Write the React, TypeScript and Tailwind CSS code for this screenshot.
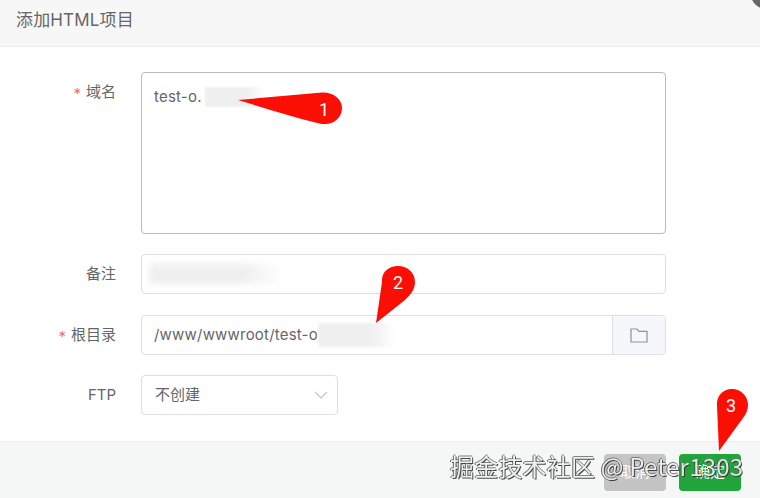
import React from "react";

const font = { fontFamily: '"Inter", "Noto Sans CJK SC", sans-serif' };

function Label({ text, required }: { text: string; required?: boolean }) {
  return (
    <div className="w-[116px] shrink-0 flex justify-end items-center h-[40px] text-[15px] text-[#666]">
      {required && <span className="text-[#f56c6c] mr-[5px] text-[15px] leading-none mt-[3px]">*</span>}
      <span>{text}</span>
    </div>
  );
}

function Pin({ d, n, tx, ty }: { d: string; n: string; tx: number; ty: number }) {
  return (
    <svg className="absolute left-0 top-0" width="760" height="498" viewBox="0 0 760 498">
      <path d={d} fill="#fb0f05" />
      <text x={tx} y={ty} fill="#fff" fontSize="18" textAnchor="middle" style={{ fontFamily: '"Roboto", sans-serif' }}>
        {n}
      </text>
    </svg>
  );
}

export default function App() {
  return (
    <div className="relative w-[760px] h-[498px] overflow-hidden bg-white flex flex-col" style={font}>
      <header className="h-[47px] shrink-0 bg-[#f7f7f7] border-b border-[#ececec] pl-[16px] flex items-center pb-[4px]">
        <span className="text-[17px] text-[#666] tracking-[0.15px]">添加HTML项目</span>
      </header>

      <main className="flex-1 flex flex-col pt-[25px]">
        <div className="flex">
          <Label text="域名" required />
          <div className="ml-[25px] w-[525px] h-[162px] border border-[#bbbbbb] rounded-[4px] px-[12px] pt-[13px] text-[15px] leading-[22px] text-[#666] tracking-[0.2px] flex items-start">
            <span>test-o.</span>
            <span className="ml-[3px] w-[60px] h-[20px] mt-[1px] bg-gradient-to-r from-[#efefef] from-70% to-white blur-[1px]" />
          </div>
        </div>

        <div className="flex mt-[20px]">
          <Label text="备注" />
          <div className="ml-[25px] w-[525px] h-[40px] border border-[#dcdfe6] rounded-[4px] pl-[7px] flex items-center">
            <span className="w-[134px] h-[20px] bg-gradient-to-r from-[#efefef] from-70% to-white blur-[3px]" />
          </div>
        </div>

        <div className="flex mt-[21px]">
          <Label text="根目录" required />
          <div className="ml-[25px] w-[525px] h-[40px] border border-[#dcdfe6] rounded-[4px] flex items-center">
            <div className="flex-1 pl-[12px] flex items-center text-[15px] text-[#666] tracking-[0.2px]">
              <span>/www/wwwroot/test-o</span>
              <span className="w-[78px] h-[24px] bg-gradient-to-r from-[#f0f0f0] from-70% to-white blur-[1px]" />
            </div>
            <div className="w-[53px] h-full shrink-0 border-l border-[#dcdfe6] bg-[#f5f7fa] rounded-r-[4px] flex items-center justify-center">
              <svg width="18" height="15" viewBox="0 0 18 15" fill="none" stroke="#8b929e" strokeWidth="1.2">
                <path d="M1 1h6l2 2.4h8V14H1z" />
              </svg>
            </div>
          </div>
        </div>

        <div className="flex mt-[20px]">
          <Label text="FTP" />
          <div className="ml-[25px] w-[197px] h-[40px] border border-[#dcdfe6] rounded-[4px] pl-[13px] pr-[9px] flex items-center justify-between text-[15px] text-[#666]">
            <span>不创建</span>
            <svg width="14" height="8" viewBox="0 0 14 8" fill="none" stroke="#c0c4cc" strokeWidth="1.1">
              <path d="M1 1l6 6 6-6" />
            </svg>
          </div>
        </div>
      </main>

      <footer className="h-[57px] shrink-0 bg-[#f5f7f7] border-t border-[#e8eded] flex items-start justify-end gap-[13px] pt-[12px] pr-[19px]">
        <button className="w-[62px] h-[37px] rounded-[4px] bg-[#c4c4c4] text-white text-[15px]">取消</button>
        <button className="w-[62px] h-[37px] rounded-[4px] bg-[#20a53a] text-white text-[15px]">确定</button>
      </footer>

      <Pin
        d="M238 100 L322 92.5 C333 92 342 99 342 108 C342 118 333 125 323 124 C318 123.5 290 116 238 100 Z"
        n="1"
        tx={324}
        ty={116}
      />
      <Pin
        d="M376 323 L382 282 C381 272 389 266 398 266 C408 266 415 273 415 282 C415 290 410 295 405 300 Z"
        n="2"
        tx={398}
        ty={289}
      />
      <Pin
        d="M719 451 L717 406 C716 396 723 389 732 389 C741 389 748 396 748 405 C748 410 746 414 743 418 Z"
        n="3"
        tx={731}
        ty={412}
      />

      <div
        className="absolute left-[450px] top-[449px] text-[24px] leading-[34px] tracking-[0.2px] whitespace-nowrap text-[#f0f0f0] opacity-90 [text-shadow:1px_1px_0_#333,-1px_0_0_#555,0_-1px_0_#777]"
        style={{ fontFamily: '"Noto Sans CJK SC", "Noto Sans", sans-serif' }}
      >
        掘金技术社区 @ Peter1303
      </div>

      <div className="absolute left-[751px] -top-[21px] w-[30px] h-[30px] rounded-full bg-[#666]" />
    </div>
  );
}
